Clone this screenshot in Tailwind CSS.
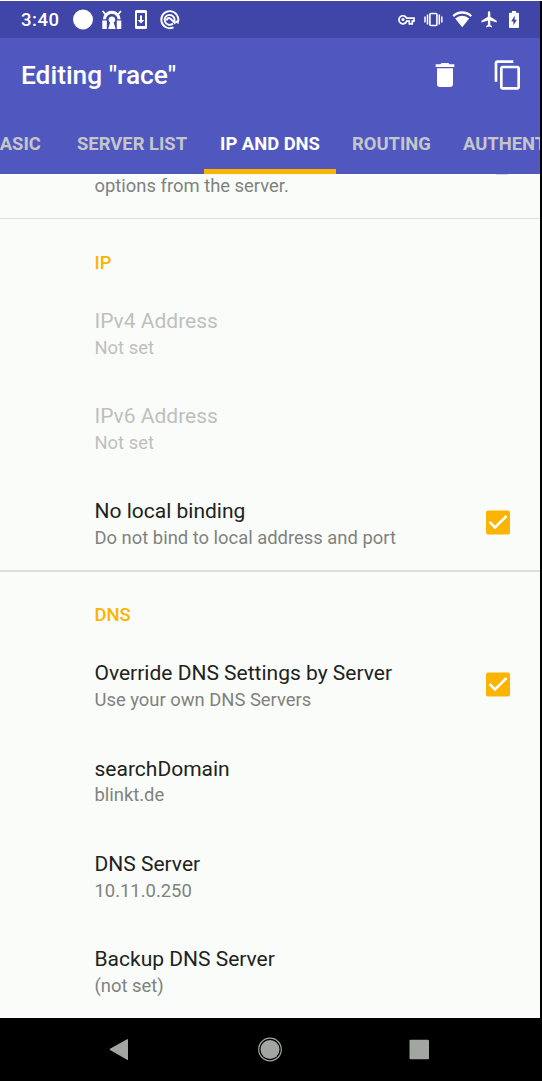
<!DOCTYPE html>
<html lang="en">
<head>
<meta charset="utf-8">
<title>Editing profile</title>
<script src="https://cdn.jsdelivr.net/npm/@tailwindcss/browser@4"></script>
</head>
<body class="bg-black overflow-hidden">
<div class="flex h-[1081px] w-[542px] flex-col border-t border-white bg-black font-['Roboto',sans-serif]">
  <div class="flex h-[1017px] w-[540px] flex-col overflow-hidden bg-[#fafcf9]">
    <header class="h-[173px] shrink-0 bg-[#5058c0] text-white">
      <div class="flex h-[37px] items-center bg-[#4046a8] pl-[21px]">
        <span class="w-[51px] pt-px text-[18.500px] font-medium leading-none tracking-[0.5px]">3:40</span>
        <svg class="block h-[37px] w-[120px]" viewBox="72 1 120 37" fill="#fff">
          <circle cx="83" cy="19.500" r="10"/>
          <path d="M102.300 29v-8.500h4.500V29zM116.800 29v-8.500h4.500V29zM108.200 29l1.900-6.500a3.300 3.300 0 1 1 3.600 0l1.900 6.500z"/>
          <path d="M104.500 19.300a7.300 7 0 0 1 14.600 0" fill="none" stroke="#fff" stroke-width="3"/>
          <path d="M105.500 14.500l-2.800-3.500M118.100 14.500l2.800-3.500" fill="none" stroke="#fff" stroke-width="1.800"/>
          <path fill-rule="evenodd" d="M136.500 10h9q1.500 0 1.500 1.500v16q0 1.500-1.500 1.500h-9q-1.500 0-1.500-1.500v-16q0-1.500 1.500-1.500zM137 13v13h8V13zM140 15.500h2v4.500h2.400l-3.400 3.400-3.400-3.400h2.400z"/>
          <path d="M173.500 27.300a8.500 8.500 0 1 1 4.300-4.800l-2.300-1.300" fill="none" stroke="#fff" stroke-width="1.900"/>
          <path d="M173 23.500a5 5 0 1 1 1.300-2M166.500 20.500q1-3.200 3.500-2.200l5.500 5.200" fill="none" stroke="#fff" stroke-width="1.900"/>
        </svg>
        <svg class="ml-auto block h-[37px] w-[150px]" viewBox="390 1 150 37" fill="#fff">
          <path d="M406.600 18.200h7.400v2.900h-1.700v2.700h-3v-2.700h-2.600a4 4 0 1 1-.1-2.900z" fill="none" stroke="#fff" stroke-width="1.700"/>
          <circle cx="403" cy="19.600" r="1.500"/>
          <path d="M425 16.500v6M427.500 14.500v10M439.300 14.500v10M441.800 16.500v6" stroke="#fff" stroke-width="1.500"/>
          <rect x="429.900" y="13.500" width="7" height="12" rx="1" fill="none" stroke="#fff" stroke-width="1.600"/>
          <path d="M452.500 15.200a14 14 0 0 1 19.500 0l-1.500 1.900a12 12 0 0 0-16.500 0zM455.200 18.400a10.500 10.500 0 0 1 14 0l-7 8.800z"/>
          <path d="M496.700 22.500v-1.700l-6.400-4v-4.400a1.200 1.200 0 0 0-2.400 0v4.400l-6.400 4v1.700l6.400-2v4.400l-1.600 1.200v1.300l2.800-.8 2.800.8v-1.300l-1.600-1.200v-4.400z"/>
          <path fill-rule="evenodd" d="M512 11h4v1.800h2q1 0 1 1V27q0 1-1 1h-8q-1 0-1-1V13.800q0-1 1-1h2zM514.700 15.500l-3.500 6h2.200v4l3.400-5.700h-2.100z"/>
        </svg>
      </div>
      <div class="flex h-[73px] items-center pl-[21px] pr-[16px]">
        <h1 class="grow pt-[2px] text-[26.300px] font-medium leading-none">Editing "race"</h1>
        <svg class="mr-[31px] h-8 w-8" viewBox="0 0 24 24" fill="#fff"><path d="M6 19c0 1.100.9 2 2 2h8c1.100 0 2-.9 2-2V7H6v12zM19 4h-3.500l-1-1h-5l-1 1H5v2h14V4z"/></svg>
        <svg class="h-8 w-8" viewBox="0 0 24 24" fill="#fff"><path d="M16 1H4c-1.100 0-2 .9-2 2v14h2V3h12V1zm3 4H8c-1.100 0-2 .9-2 2v14c0 1.100.9 2 2 2h11c1.100 0 2-.9 2-2V7c0-1.100-.9-2-2-2zm0 16H8V7h11v14z"/></svg>
      </div>
      <nav class="-ml-[27px] flex h-[63px] w-max whitespace-nowrap text-[18.400px] font-bold leading-[66px] text-[#c5c6c8]">
        <span class="w-[88px] pl-[15px]">BASIC</span>
        <span class="w-[143px] pl-[16px]">SERVER LIST</span>
        <span class="w-[132px] border-b-[5px] border-[#fbb400] pl-[16px] text-white">IP AND DNS</span>
        <span class="w-[111px] pl-[16px]">ROUTING</span>
        <span class="pl-[16px]">AUTHENTICATION</span>
      </nav>
    </header>
    <main class="text-[21px] leading-[26px] text-[#202220]">
      <div class="flex h-[45px] justify-between border-b border-[#dedfdd] pl-[94.500px] pr-[32px] text-[18.400px] leading-[24px] text-[#80827f]"><span>options from the server.</span><i class="h-px w-3 rounded-b-full bg-[#d5d6df]"></i></div>
      <section class="h-[353px] border-b-2 border-[#dedfdd] pl-[94.500px]">
        <h2 class="h-[89px] pt-[31px] text-[18.400px] font-medium text-[#fbb400]">IP</h2>
        <div class="h-[95px] text-[#bec0bd]"><p>IPv4 Address</p><p class="pt-px text-[18.400px]">Not set</p></div>
        <div class="h-[95px] text-[#bec0bd]"><p>IPv6 Address</p><p class="pt-px text-[18.400px]">Not set</p></div>
        <div class="flex justify-between pr-[26px]"><div><p>No local binding</p><p class="pt-px text-[18.400px] text-[#80827f]">Do not bind to local address and port</p></div>
          <svg class="mt-[8px] h-8 w-8" viewBox="0 0 32 32"><rect x="4" y="4.500" width="24" height="24" rx="2" fill="#fbb400"/><path d="M7.500 16l5.500 5.500L24.500 10" fill="none" stroke="#fff" stroke-width="2.500"/></svg></div>
      </section>
      <section class="pl-[94.500px]">
        <h2 class="h-[88px] pt-[30px] text-[18.400px] font-medium text-[#fbb400]">DNS</h2>
        <div class="flex h-[96px] justify-between pr-[26px]"><div><p>Override DNS Settings by Server</p><p class="pt-px text-[18.400px] text-[#80827f]">Use your own DNS Servers</p></div>
          <svg class="mt-[8px] h-8 w-8" viewBox="0 0 32 32"><rect x="4" y="4.500" width="24" height="24" rx="2" fill="#fbb400"/><path d="M7.500 16l5.500 5.500L24.500 10" fill="none" stroke="#fff" stroke-width="2.500"/></svg></div>
        <div class="h-[95px]"><p>searchDomain</p><p class="text-[18.400px] text-[#80827f]">blinkt.de</p></div>
        <div class="h-[95px]"><p>DNS Server</p><p class="pt-px text-[18.400px] text-[#80827f]">10.11.0.250</p></div>
        <div><p>Backup DNS Server</p><p class="pt-px text-[18.400px] text-[#80827f]">(not set)</p></div>
      </section>
    </main>
  </div>
  <footer class="h-[63px] w-[540px]">
    <svg class="h-[63px] w-[540px]" viewBox="0 1018 540 63" fill="#a3a5a2">
      <path d="M110 1048.800q-.5.700 0 1.200l17.500 10q.5 0 .5-.5v-20q0-.5-.5-.5z"/>
      <circle cx="270" cy="1049.500" r="9.500"/><circle cx="270" cy="1049.500" r="11.300" fill="none" stroke="#a3a5a2" stroke-width="1.200"/>
      <rect x="409.500" y="1039.800" width="19.500" height="19.500" rx="1"/>
    </svg>
  </footer>
</div>
</body>
</html>
